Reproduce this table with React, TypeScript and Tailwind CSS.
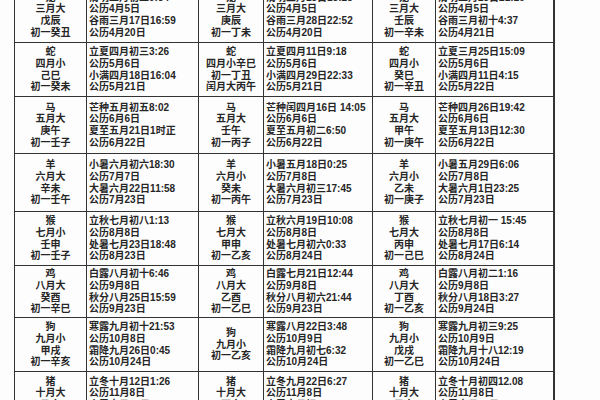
import { Fragment } from "react";

type Cell = { sign: string[]; data: string[] };

const years: Cell[][] = [
  [
    { sign: ["龙", "三月大", "戊辰", "初一癸丑"], data: ["清明二月初二9:34", "公历4月5日", "谷雨三月17日16:59", "公历4月20日"] },
    { sign: ["蛇", "四月小", "己巳", "初一癸未"], data: ["立夏四月初三3:26", "公历5月6日", "小满四月18日16:04", "公历5月21日"] },
    { sign: ["马", "五月大", "庚午", "初一壬子"], data: ["芒种五月初五8:02", "公历6月6日", "夏至五月21日1时正", "公历6月22日"] },
    { sign: ["羊", "六月大", "辛未", "初一壬午"], data: ["小暑六月初六18:30", "公历7月7日", "大暑六月22日11:58", "公历7月23日"] },
    { sign: ["猴", "七月小", "壬申", "初一壬子"], data: ["立秋七月初八1:13", "公历8月8日", "处暑七月23日18:48", "公历8月23日"] },
    { sign: ["鸡", "八月大", "癸酉", "初一辛巳"], data: ["白露八月初十6:46", "公历9月8日", "秋分八月25日15:59", "公历9月23日"] },
    { sign: ["狗", "九月小", "甲戌", "初一辛亥"], data: ["寒露九月初十21:53", "公历10月8日", "霜降九月26日0:45", "公历10月24日"] },
    { sign: ["猪", "十月大", "乙亥", "初一庚辰"], data: ["立冬十月12日1:26", "公历11月8日", "小雪十月27日22:59", "公历11月22日"] },
  ],
  [
    { sign: ["龙", "三月大", "庚辰", "初一丁未"], data: ["清明三月13日13:23", "公历4月5日", "谷雨三月28日22:52", "公历4月20日"] },
    { sign: ["蛇", "四月小辛巳", "初一丁丑", "闰月大丙午"], data: ["立夏四月11日9:18", "公历5月6日", "小满四月29日22:33", "公历5月21日"] },
    { sign: ["马", "五月大", "壬午", "初一丙子"], data: ["芒种闰四月16日 14:05", "公历6月6日", "夏至五月初二6:50", "公历6月22日"] },
    { sign: ["羊", "六月小", "癸未", "初一丙午"], data: ["小暑五月18日0:25", "公历7月8日", "大暑六月初三17:45", "公历7月23日"] },
    { sign: ["猴", "七月大", "甲申", "初一乙亥"], data: ["立秋六月19日10:08", "公历8月8日", "处暑七月初六0:33", "公历8月24日"] },
    { sign: ["鸡", "八月大", "乙酉", "初一乙巳"], data: ["白露七月21日12:44", "公历9月8日", "秋分八月初六21:44", "公历9月23日"] },
    { sign: ["狗", "九月小", "初一乙亥"], data: ["寒露八月22日3:48", "公历10月9日", "霜降九月初七6:32", "公历10月24日"] },
    { sign: ["猪", "十月大", "丁亥", "初一甲辰"], data: ["立冬九月22日6:27", "公历11月8日", "小雪十月初八4:19", "公历11月22日"] },
  ],
  [
    { sign: ["龙", "三月大", "壬辰", "初一辛未"], data: ["清明二月23日21:19", "公历4月5日", "谷雨三月初十4:37", "公历4月21日"] },
    { sign: ["蛇", "四月小", "癸巳", "初一辛丑"], data: ["立夏三月25日15:09", "公历5月6日", "小满四月11日4:15", "公历5月22日"] },
    { sign: ["马", "五月大", "甲午", "初一庚午"], data: ["芒种四月26日19:42", "公历6月6日", "夏至五月13日12:30", "公历6月22日"] },
    { sign: ["羊", "六月小", "乙未", "初一庚子"], data: ["小暑五月29日6:06", "公历7月8日", "大暑六月1日23:25", "公历7月23日"] },
    { sign: ["猴", "七月大", "丙申", "初一己巳"], data: ["立秋七月初一 15:45", "公历8月8日", "处暑七月17日6:14", "公历8月24日"] },
    { sign: ["鸡", "八月大", "丁酉", "初一乙亥"], data: ["白露八月初二1:16", "公历9月8日", "秋分八月18日3:27", "公历9月24日"] },
    { sign: ["狗", "九月小", "戊戌", "初一乙巳"], data: ["寒露九月初三9:25", "公历10月9日", "霜降九月十八12:19", "公历10月24日"] },
    { sign: ["猪", "十月大", "己亥", "初一甲戌"], data: ["立冬十月初四12.08", "公历11月8日", "小雪十月19日9:48", "公历11月22日"] },
  ],
];

export default function App() {
  const rows = years[0].map((_, r) => r);
  return (
    <div className="w-[600px] h-[400px] overflow-hidden bg-[#fdfdfd] text-[#262626] font-['Liberation_Sans','Noto_Sans_CJK_SC',sans-serif] text-[10px] leading-[11.7px] font-bold">
      <div className="ml-[14px] mt-[-12px] w-[540px] grid grid-cols-[72px_112px_65px_109px_63px_119px] grid-rows-[55px_54px_57px_58px_54px_52px_54px_55px] border-l-[1.5px] border-[#333]">
        {rows.map((r) =>
          years.map((year, y) => (
            <Fragment key={`${y}-${r}`}>
              <div className="flex flex-col items-center justify-center border-r-[1.5px] border-b-[1.5px] border-[#333]">
                {year[r].sign.map((t, i) => (
                  <div key={i}>{t}</div>
                ))}
              </div>
              <div
                className={`flex flex-col justify-center pl-[2px] border-b-[1.5px] border-[#333] ${
                  y === 2 ? "border-r-2" : "border-r-[1.5px]"
                }`}
              >
                {year[r].data.map((t, i) => (
                  <div key={i} className="whitespace-nowrap">
                    {t}
                  </div>
                ))}
              </div>
            </Fragment>
          ))
        )}
      </div>
    </div>
  );
}
